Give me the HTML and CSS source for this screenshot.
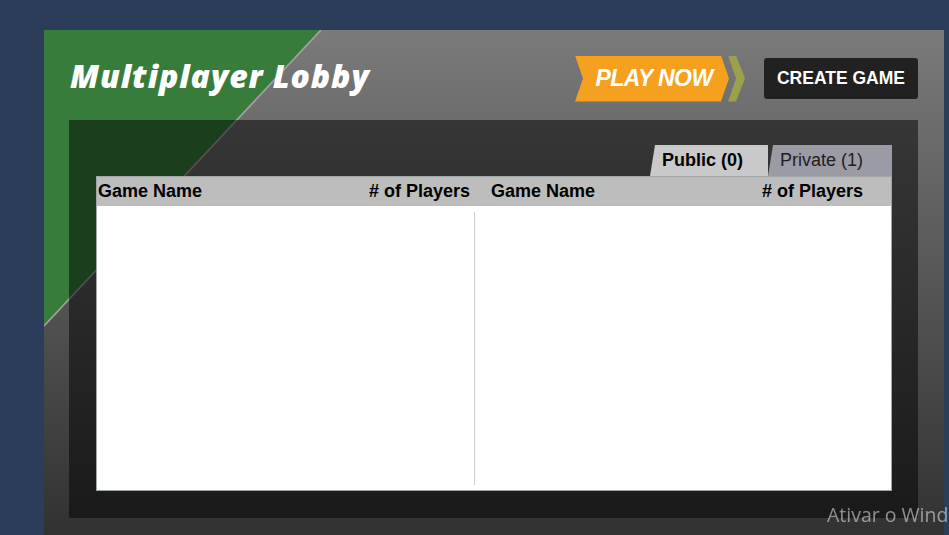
FILE: index.html
```html
<!DOCTYPE html>
<html lang="en">
<head>
  <meta charset="UTF-8">
  <title>Multiplayer Lobby</title>
  <link rel="stylesheet" href="styles.css">
</head>
<body>

  <!-- lobby panel -->
  <div class="lobby">
    <svg class="lobby-stripe" width="300" height="320" viewBox="0 0 300 320">
      <polygon points="0,0 276,0 0,295" fill="#377c3a" />
      <line x1="277" y1="0" x2="0" y2="296" stroke="#a3a3a3" stroke-width="1.6" />
    </svg>

    <div class="lobby-header">
      <h1 class="lobby-title">Multiplayer Lobby</h1>
      <div class="lobby-actions">
        <div class="play-now">
          <span class="play-now-ribbon">PLAY NOW</span>
          <span class="play-now-chevron"></span>
        </div>
        <button class="create-game">CREATE GAME</button>
      </div>
    </div>

    <div class="lobby-body">
      <div class="tabs">
        <div class="tab tab-active">Public (0)</div>
        <div class="tab tab-private">Private (1)</div>
      </div>

      <div class="games">
        <div class="games-head">
          <div class="games-col">
            <span>Game Name</span>
            <span># of Players</span>
          </div>
          <div class="games-col games-col-right">
            <span>Game Name</span>
            <span># of Players</span>
          </div>
        </div>
        <div class="games-list">
          <div class="games-cell"></div>
          <div class="games-cell games-cell-right"></div>
        </div>
      </div>
    </div>
  </div>

  <!-- windows activation notice -->
  <div class="activate">
    <p>Ativar o Windows</p>
    <p class="activate-sub">Acesse Configurações para ativar o Windows.</p>
  </div>

</body>
</html>
```

FILE: styles.css
```css
/* ===== General ===== */
body {
  margin: 0;
  padding: 30px 0 0 44px;
  background-color: #2b3d59;
  font-family: 'Liberation Sans', Arial, sans-serif;
  height: 535px;
  overflow: hidden;
  box-sizing: border-box;
}

/* ===== Panel ===== */
.lobby {
  position: relative;
  width: 900px;
  height: 530px;
  background: linear-gradient(#7a7a7a, #2e2e2e);
}

.lobby-stripe {
  position: absolute;
  top: 0;
  left: 0;
}

.lobby-header {
  position: relative;
  display: flex;
  justify-content: space-between;
  align-items: center;
  height: 90px;
  padding: 0 26px 0 26px;
}

.lobby-title {
  margin: 0;
  font-family: 'Open Sans', sans-serif;
  font-weight: 800;
  font-style: italic;
  font-size: 32px;
  color: #ffffff;
  letter-spacing: 0.9px;
}

.lobby-actions {
  display: flex;
  align-items: center;
  gap: 19px;
  margin-top: 7px;
}

/* ===== Play now ===== */
.play-now {
  display: flex;
  align-items: center;
}

.play-now-ribbon {
  display: flex;
  align-items: center;
  justify-content: center;
  width: 154px;
  height: 46px;
  padding-left: 4px;
  box-sizing: border-box;
  background-color: #f5a01f;
  clip-path: polygon(0 0, 146px 0, 154px 50%, 146px 100%, 0 100%, 8px 50%);
  color: #ffffff;
  font-weight: bold;
  font-style: italic;
  font-size: 23px;
  letter-spacing: -0.6px;
}

.play-now-chevron {
  width: 17px;
  height: 46px;
  margin-left: -1px;
  background-color: #9c9f4c;
  clip-path: polygon(0 0, 8px 0, 17px 50%, 8px 100%, 0 100%, 8px 50%);
}

.create-game {
  width: 154px;
  height: 41px;
  background-color: #212121;
  color: #ffffff;
  border: none;
  border-radius: 3px;
  font-family: 'Liberation Sans', Arial, sans-serif;
  font-weight: bold;
  font-size: 17.5px;
  cursor: pointer;
}

/* ===== Lobby body ===== */
.lobby-body {
  position: relative;
  margin: 0 26px 0 25px;
  height: 398px;
  padding: 25px 26px 0 27px;
  box-sizing: border-box;
  background-color: rgba(0, 0, 0, 0.5);
}

.tabs {
  display: flex;
  justify-content: flex-end;
  height: 31px;
}

.tab {
  display: flex;
  align-items: center;
  font-size: 18px;
  color: #1e1e1e;
}

.tab-active {
  width: 118px;
  padding-left: 12px;
  box-sizing: border-box;
  background-color: #c9c9c9;
  clip-path: polygon(5px 0, 100% 0, 100% 100%, 0 100%);
  font-weight: bold;
  color: #000000;
}

.tab-private {
  width: 124px;
  padding-left: 12px;
  box-sizing: border-box;
  background-color: #9b9ba6;
  clip-path: polygon(5px 0, 100% 0, 100% 100%, 0 100%);
}

/* ===== Games table ===== */
.games {
  border: 1px solid #9fa6a6;
  background-color: #ffffff;
  height: 315px;
  box-sizing: border-box;
  display: flex;
  flex-direction: column;
}

.games-head {
  display: grid;
  grid-template-columns: 377px 1fr;
  height: 29px;
  background-color: #bdbdbd;
  font-weight: bold;
  font-size: 18px;
  color: #000000;
}

.games-col {
  display: flex;
  justify-content: space-between;
  align-items: center;
  padding: 0 4px 0 1px;
}

.games-col-right {
  padding: 0 28px 0 17px;
}

.games-list {
  flex: 1;
  display: grid;
  grid-template-columns: 377px 1fr;
  padding: 6px 0 5px 0;
}

.games-cell-right {
  border-left: 1px solid #cfcfcf;
}

/* ===== Activation notice ===== */
.activate {
  position: fixed;
  left: 827px;
  top: 501px;
  white-space: nowrap;
  font-family: 'Open Sans', sans-serif;
  color: rgba(255, 255, 255, 0.5);
}

.activate p {
  margin: 0;
  font-size: 19.5px;
  line-height: 28px;
}

.activate .activate-sub {
  font-size: 13px;
}
```
